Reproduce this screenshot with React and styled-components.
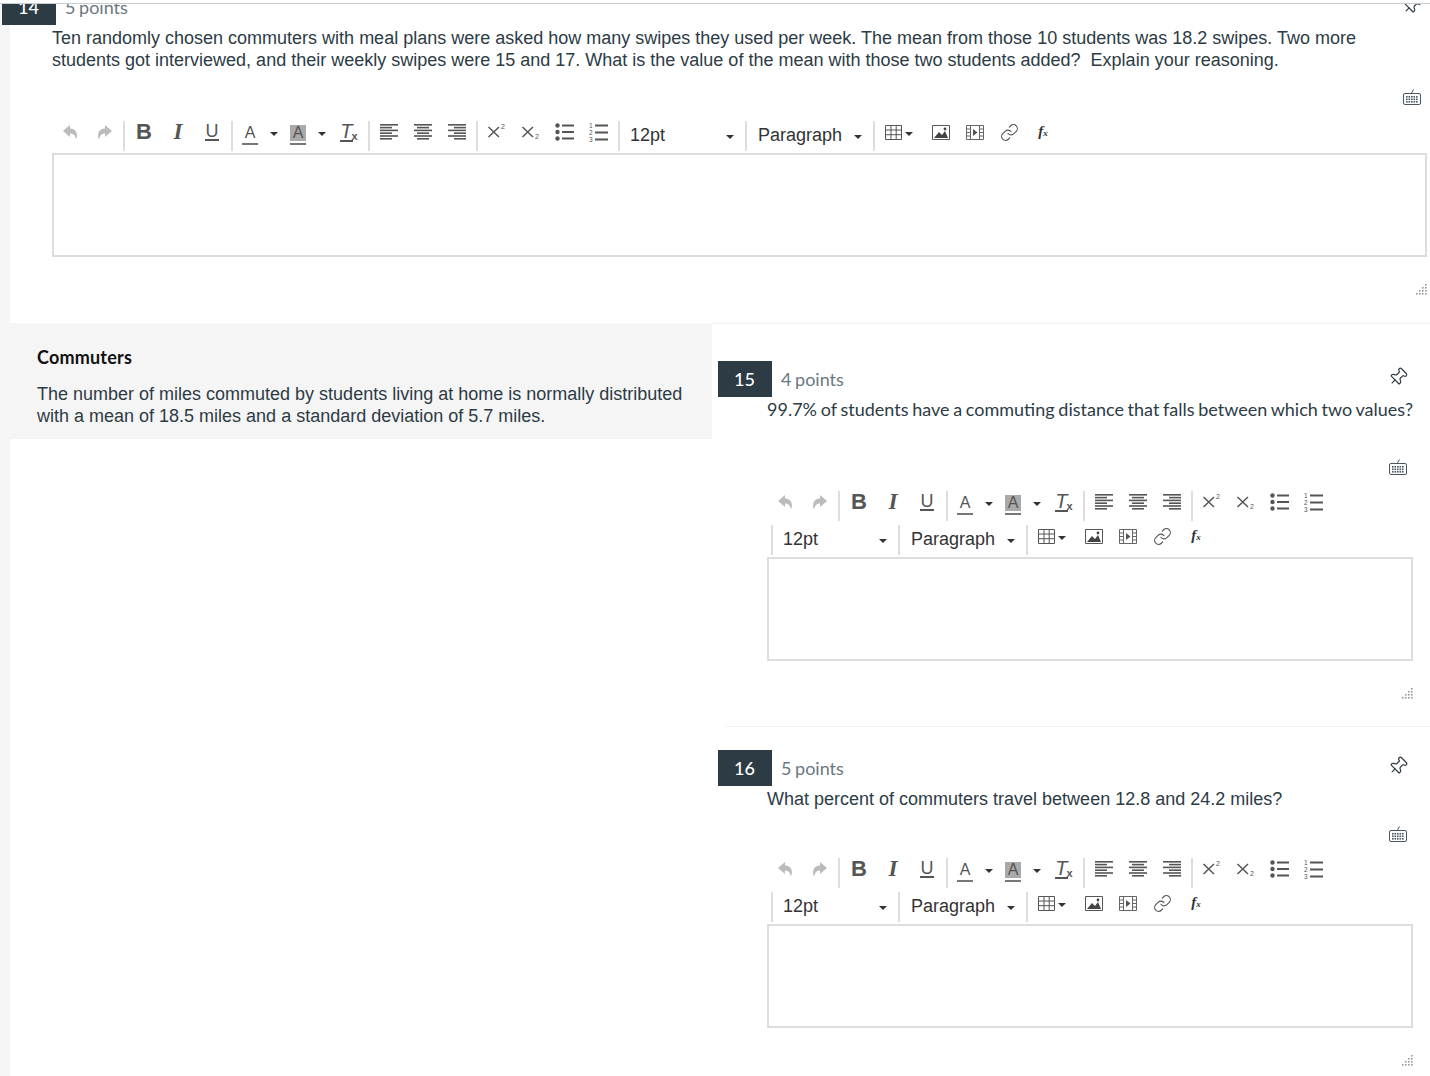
import React from "react";
import styled, { createGlobalStyle } from "styled-components";
import { Link, Pin } from "lucide-react";

const GlobalStyle = createGlobalStyle`
  html, body {
    margin: 0;
    padding: 0;
    background: #fff;
    overflow: hidden;
  }
`;

const TopEdge = styled.div`
  height: 3px;
  background: #fff;
  border-bottom: 1px solid #c7cdd1;
`;

const Viewport = styled.div`
  height: 1072px;
  overflow: hidden;
  background: #f5f5f5;
  padding-left: 10px;
`;

const Main = styled.main`
  background: #fff;
  margin-top: -19px;
  min-height: 1200px;
`;

const Question = styled.section`
  padding: ${(p) => p.$top}px ${(p) => p.$right}px 0 42px;
  border-bottom: ${(p) => (p.$line ? "1px solid #f2f2f2" : "none")};
  height: ${(p) => p.$height}px;
  box-sizing: border-box;
`;

const Header = styled.header`
  display: flex;
  align-items: center;
  height: 36px;
  margin-left: -${(p) => p.$lead}px;
  margin-bottom: 2px;
  color: #6b7780;
  font: 18px/36px Lato, sans-serif;
  word-spacing: -1px;
`;

const Badge = styled.div`
  width: 54px;
  height: 36px;
  margin-right: 9px;
  background: #2d3b45;
  color: #fff;
  text-align: center;
  font: 500 18px/36px Lato, sans-serif;
  text-indent: -1px;
`;

const PinSlot = styled.div`
  margin-left: auto;
  margin-right: 5px;
  display: flex;
  color: #2d3b45;
  margin-top: -4px;
  svg {
    transform: rotate(45deg);
  }
`;

const Prompt = styled.p`
  margin: ${(p) => (p.$lato ? "-1px" : "0")} 0 ${(p) => p.$after}px;
  min-height: ${(p) => p.$minHeight || 22}px;
  color: #2d3b45;
  font: 18px/22px ${(p) => (p.$lato ? "Lato" : '"Liberation Sans"')}, sans-serif;
  word-spacing: ${(p) => (p.$lato ? "-0.9px" : "0")};
`;

const KeyboardRow = styled.div`
  display: flex;
  justify-content: flex-end;
  height: 16px;
  margin-bottom: 12px;
  padding-right: 6px;
  color: #4a5660;
`;

const Toolbar = styled.div`
  display: flex;
  flex-wrap: wrap;
  padding-left: 2px;
  margin-bottom: 2px;
`;

const Group = styled.div`
  display: flex;
  height: 30px;
  margin-top: 4px;
  margin-left: ${(p) => (p.$first ? "-1px" : "2px")};
  padding-left: ${(p) => (p.$first ? "0" : "2px")};
  border-left: ${(p) => (p.$first ? "none" : "2px solid #ddd")};
`;

const ToolButton = styled.div`
  width: 34px;
  height: 30px;
  margin-top: -4px;
  display: flex;
  align-items: center;
  justify-content: center;
  color: #555;
  flex: none;
`;

const ColorButton = styled(ToolButton)`
  width: 48px;
  justify-content: flex-start;
  margin-right: ${(p) => p.$after || 0}px;
`;

const TableButton = styled(ToolButton)`
  width: 47px;
  justify-content: flex-start;
  padding-left: 8px;
  box-sizing: border-box;
`;

const Caret = styled.span`
  width: 0;
  height: 0;
  margin-left: ${(p) => p.$gap}px;
  margin-top: 3px;
  border-left: 4px solid transparent;
  border-right: 4px solid transparent;
  border-top: 4px solid #333;
  flex: none;
`;

const BoldGlyph = styled.span`
  font: 700 22px/22px "Liberation Sans", sans-serif;
`;

const ItalicGlyph = styled.span`
  font: italic 700 23px/22px "Liberation Serif", serif;
`;

const UnderGlyph = styled.span`
  font: 18px/15px "Liberation Sans", sans-serif;
  border-bottom: 2px solid #555;
  padding: 0 0.5px;
`;

const LetterGlyph = styled.span`
  width: 16px;
  height: 16px;
  margin: 6px 0 0 7px;
  text-align: center;
  font: 16px/16px "Liberation Sans", sans-serif;
  color: #555;
  background: ${(p) => (p.$shade ? "#aaa" : "transparent")};
  background-clip: content-box;
  border-bottom: 2px solid #777;
  padding-bottom: 2px;
  flex: none;
`;

const ClearGlyph = styled.span`
  display: flex;
  align-items: flex-end;
  color: #555;
`;

const ClearLetter = styled.span`
  font: italic 20px/17px "Liberation Sans", sans-serif;
  border-bottom: 2px solid #555;
`;

const ClearMark = styled.span`
  font: 700 11px/11px "Liberation Sans", sans-serif;
  margin-left: -1px;
`;

const FxGlyph = styled.span`
  font: italic 700 15px/15px "Liberation Serif", serif;
  color: #333;
  small {
    font-size: 9px;
  }
`;

const SelectBox = styled.div`
  width: ${(p) => p.$width}px;
  height: 30px;
  margin-top: -1px;
  padding: 0 9px 0 ${(p) => p.$pad}px;
  box-sizing: border-box;
  display: flex;
  align-items: center;
  justify-content: space-between;
  color: #333;
  font: 18px/30px "Liberation Sans", sans-serif;
`;

const Editor = styled.div`
  height: 104px;
  box-sizing: border-box;
  background: #fff;
  border: 2px solid #ddd;
`;

const ResizeRow = styled.div`
  display: flex;
  justify-content: flex-end;
  margin-top: 27px;
  height: 12px;
`;

const Split = styled.div`
  display: flex;
  align-items: flex-start;
`;

const Passage = styled.aside`
  flex: none;
  width: 702px;
  height: 116px;
  margin-top: -1px;
  box-sizing: border-box;
  padding: 23px 27px 0;
  background: #f5f5f5;
`;

const PassageTitle = styled.h3`
  margin: 0 0 15px;
  color: #111;
  font: 700 18px/22px Lato, sans-serif;
  letter-spacing: 0.2px;
`;

const PassageText = styled.p`
  margin: 0;
  color: #2d3b45;
  font: 18px/22px "Liberation Sans", sans-serif;
`;

const QuestionColumn = styled.div`
  flex: 1;
  min-width: 0;
  padding: 14px 0 0 13px;
`;

function UndoIcon({ flip }) {
  return (
    <svg width="17" height="16" viewBox="0 0 17 16" style={flip ? { transform: "scaleX(-1)" } : undefined}>
      <path d="M8 1 L1 7 L8 13 V9.5 C11 9.5 13 11 14 15.5 C16.8 9 13 4.5 8 4.5 Z" fill="#bbb" />
    </svg>
  );
}

function AlignIcon({ mode }) {
  const rows = [0, 1, 2, 3, 4, 5];
  return (
    <svg width="18" height="16" viewBox="0 0 18 16">
      {rows.map((i) => {
        const w = i % 2 === 1 ? 12 : 18;
        const x = mode === "left" ? 0 : mode === "center" ? (18 - w) / 2 : 18 - w;
        return <rect key={i} x={x} y={i * 2.8} width={w} height="1.6" fill="#555" />;
      })}
    </svg>
  );
}

function ScriptIcon({ up }) {
  return (
    <svg width="22" height="18" viewBox="0 0 22 18">
      <path d="M2.5 4 L13 14 M13 4 L2.5 14" stroke="#555" strokeWidth="1.5" fill="none" />
      <text x="15" y={up ? 6 : 16} fontSize="7" fontFamily="Liberation Sans, sans-serif" fill="#555">
        2
      </text>
    </svg>
  );
}

function BulletIcon() {
  return (
    <svg width="20" height="18" viewBox="0 0 20 18">
      {[2.5, 9, 15.5].map((y) => (
        <g key={y}>
          <circle cx="2.5" cy={y} r="2.2" fill="#555" />
          <rect x="7" y={y - 1} width="12" height="2" fill="#555" />
        </g>
      ))}
    </svg>
  );
}

function NumberIcon() {
  return (
    <svg width="20" height="19" viewBox="0 0 20 19">
      {[2.5, 9.5, 16.5].map((y, i) => (
        <g key={y}>
          <text x="0" y={y + 2.5} fontSize="6.5" fontFamily="Liberation Sans, sans-serif" fill="#555">
            {i + 1}
          </text>
          <rect x="6" y={y - 1} width="13" height="2" fill="#555" />
        </g>
      ))}
    </svg>
  );
}

function TableIcon() {
  return (
    <svg width="17" height="15" viewBox="0 0 17 15" style={{ flex: "none" }}>
      <path d="M.5 .5H16.5V14.5H.5Z M.5 5H16.5 M.5 9.7H16.5 M6 .5V14.5 M11.2 .5V14.5" fill="none" stroke="#555" />
    </svg>
  );
}

function ImageIcon() {
  return (
    <svg width="18" height="15" viewBox="0 0 18 15">
      <path d="M.5 .5H17.5V14.5H.5Z" fill="none" stroke="#555" />
      <path d="M2 13 L7 7 L10 10 L13 6 L16 13 Z" fill="#444" />
      <circle cx="13" cy="4" r="1.4" fill="#444" />
    </svg>
  );
}

function MediaIcon() {
  return (
    <svg width="18" height="15" viewBox="0 0 18 15">
      <path d="M.5 .5H17.5V14.5H.5Z M4.5 .5V14.5 M13.5 .5V14.5 M.5 4H4.5 M.5 7.5H4.5 M.5 11H4.5 M13.5 4H17.5 M13.5 7.5H17.5 M13.5 11H17.5" fill="none" stroke="#666" />
      <path d="M7 4 L11.5 7.5 L7 11 Z" fill="#555" />
    </svg>
  );
}

function KeyboardIcon() {
  return (
    <svg width="18" height="16" viewBox="0 0 18 16">
      <path d="M10.5 .5 L8.5 4" stroke="currentColor" fill="none" />
      <rect x=".5" y="4.5" width="17" height="11" rx="1.5" fill="none" stroke="currentColor" />
      {[7, 9.5, 12].map((y) =>
        [3, 5.5, 8, 10.5, 13].map((x) => <rect key={`${x}-${y}`} x={x} y={y} width="1.6" height="1.6" fill="currentColor" />)
      )}
    </svg>
  );
}

function ResizeIcon() {
  const dots = [];
  for (let col = 0; col < 4; col++) {
    for (let row = 0; row <= col; row++) {
      dots.push(<rect key={`${col}-${row}`} x={col * 3} y={9 - row * 3} width="1.6" height="1.6" fill="#999" />);
    }
  }
  return (
    <svg width="11" height="11" viewBox="0 0 11 11">
      {dots}
    </svg>
  );
}

function EditorTools() {
  return (
    <Toolbar>
      <Group $first>
        <ToolButton><UndoIcon /></ToolButton>
        <ToolButton><UndoIcon flip /></ToolButton>
      </Group>
      <Group>
        <ToolButton><BoldGlyph>B</BoldGlyph></ToolButton>
        <ToolButton><ItalicGlyph>I</ItalicGlyph></ToolButton>
        <ToolButton><UnderGlyph>U</UnderGlyph></ToolButton>
      </Group>
      <Group>
        <ColorButton>
          <LetterGlyph>A</LetterGlyph>
          <Caret $gap={12} />
        </ColorButton>
        <ColorButton $after={1}>
          <LetterGlyph $shade>A</LetterGlyph>
          <Caret $gap={12} />
        </ColorButton>
        <ToolButton>
          <ClearGlyph>
            <ClearLetter>T</ClearLetter>
            <ClearMark>x</ClearMark>
          </ClearGlyph>
        </ToolButton>
      </Group>
      <Group>
        <ToolButton><AlignIcon mode="left" /></ToolButton>
        <ToolButton><AlignIcon mode="center" /></ToolButton>
        <ToolButton><AlignIcon mode="right" /></ToolButton>
      </Group>
      <Group>
        <ToolButton><ScriptIcon up /></ToolButton>
        <ToolButton><ScriptIcon /></ToolButton>
        <ToolButton><BulletIcon /></ToolButton>
        <ToolButton><NumberIcon /></ToolButton>
      </Group>
      <Group>
        <SelectBox $width={121} $pad={8}>
          12pt
          <Caret $gap={0} />
        </SelectBox>
      </Group>
      <Group>
        <SelectBox $width={122} $pad={9}>
          Paragraph
          <Caret $gap={0} />
        </SelectBox>
      </Group>
      <Group>
        <TableButton>
          <TableIcon />
          <Caret $gap={3} />
        </TableButton>
        <ToolButton><ImageIcon /></ToolButton>
        <ToolButton><MediaIcon /></ToolButton>
        <ToolButton><Link size={19} strokeWidth={1.4} /></ToolButton>
        <ToolButton><FxGlyph>f<small>x</small></FxGlyph></ToolButton>
      </Group>
    </Toolbar>
  );
}

function QuestionBlock({ number, points, children, top, right, height, after, minHeight, lato, line, lead = 50 }) {
  return (
    <Question $top={top} $right={right} $height={height} $line={line}>
      <Header $lead={lead}>
        <Badge>{number}</Badge>
        {points}
        <PinSlot>
          <Pin size={20} strokeWidth={1.4} />
        </PinSlot>
      </Header>
      <Prompt $after={after} $minHeight={minHeight} $lato={lato}>
        {children}
      </Prompt>
      <KeyboardRow>
        <KeyboardIcon />
      </KeyboardRow>
      <EditorTools />
      <Editor />
      <ResizeRow>
        <ResizeIcon />
      </ResizeRow>
    </Question>
  );
}

export default function App() {
  return (
    <>
      <GlobalStyle />
      <TopEdge />
      <Viewport>
        <Main>
          <QuestionBlock number="14" points="5 points" top={4} right={3} height={339} after={18} line>
            Ten randomly chosen commuters with meal plans were asked how many swipes they used per week. The mean from those 10 students was 18.2 swipes. Two more students got interviewed, and their weekly swipes were 15 and 17. What is the value of the mean with those two students added?&nbsp; Explain your reasoning.
          </QuestionBlock>
          <Split>
            <Passage>
              <PassageTitle>Commuters</PassageTitle>
              <PassageText>
                The number of miles commuted by students living at home is normally distributed with a mean of 18.5 miles and a standard deviation of 5.7 miles.
              </PassageText>
            </Passage>
            <QuestionColumn>
              <QuestionBlock number="15" points="4 points" top={23} right={17} height={389} after={17} minHeight={44} lato line lead={49}>
                99.7% of students have a commuting distance that falls between which two values?
              </QuestionBlock>
              <QuestionBlock number="16" points="5 points" top={23} right={17} height={360} after={16} lead={49}>
                What percent of commuters travel between 12.8 and 24.2 miles?
              </QuestionBlock>
            </QuestionColumn>
          </Split>
        </Main>
      </Viewport>
    </>
  );
}
